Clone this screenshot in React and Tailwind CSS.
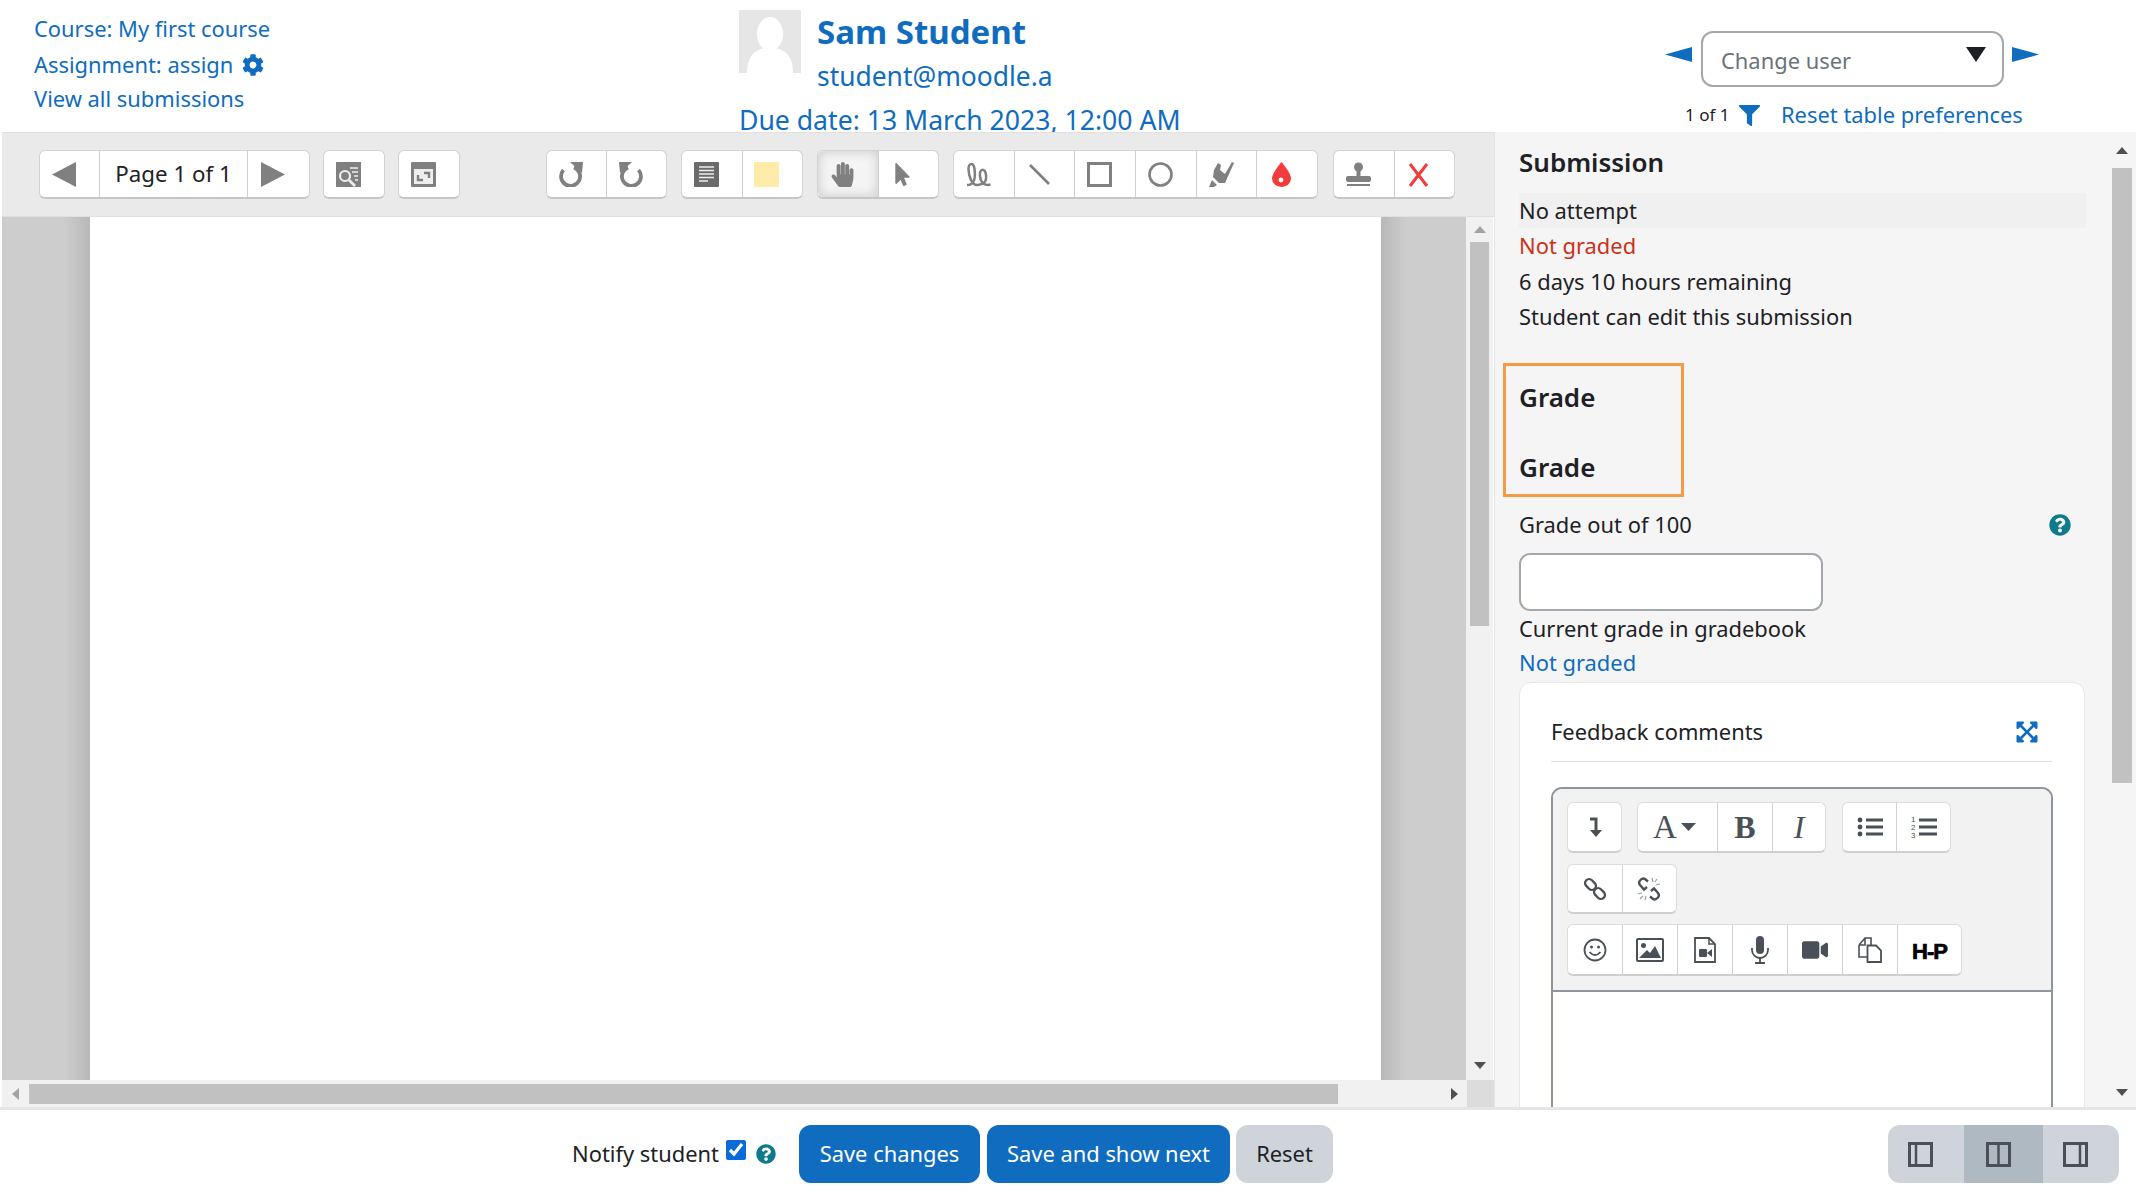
import { FaCog, FaFilter, FaQuestionCircle, FaExpandArrowsAlt, FaHandPaper, FaMousePointer, FaVideo } from "react-icons/fa";

const Svg = ({ size = 25, vb = 25, children }) => (
  <svg width={size} height={size} viewBox={`0 0 ${vb} ${vb}`}>{children}</svg>
);

const Tri = ({ w, h, dir, color }) => {
  const pts = {
    left: `0,${h / 2} ${w},0 ${w},${h}`,
    right: `0,0 ${w},${h / 2} 0,${h}`,
    up: `0,${h} ${w / 2},0 ${w},${h}`,
    down: `0,0 ${w},0 ${w / 2},${h}`,
  };
  return (
    <svg width={w} height={h} viewBox={`0 0 ${w} ${h}`} className="shrink-0">
      <polygon points={pts[dir]} fill={color} />
    </svg>
  );
};

const gray = "#808080";

const SearchPageIcon = () => (
  <Svg>
    <rect width="25" height="25" fill={gray} />
    <path d="M14 6h8M16 10h6M18 14h4M19 18h3" stroke="#eee" strokeWidth="1.6" />
    <circle cx="9" cy="14" r="5" fill={gray} stroke="#eee" strokeWidth="2.2" />
    <path d="M13 18l6 6" stroke="#eee" strokeWidth="2.6" />
  </Svg>
);

const ExpandIcon = () => (
  <Svg>
    <rect width="25" height="25" rx="1" fill={gray} />
    <rect x="3" y="7" width="19" height="15" fill="#eee" />
    <path d="M7 13v5h5M18 16v-5h-5" stroke={gray} strokeWidth="2.4" fill="none" />
  </Svg>
);

const RotateIcon = ({ flip }) => (
  <svg width="26" height="25" viewBox="0 0 26 25" style={flip ? { transform: "scaleX(-1)" } : undefined}>
    <path d="M5.5 8A9.5 9.5 0 1 0 16 5.5" stroke={gray} strokeWidth="3.8" fill="none" />
    <polygon points="12,0 25,0 24,11" fill={gray} />
  </svg>
);

const NoteIcon = () => (
  <Svg>
    <rect width="25" height="25" rx="1" fill="#6b6b6b" />
    <path d="M5 5h15M5 8.5h15M5 12h15M5 15.5h15M5 19h9" stroke="#eee" strokeWidth="1.5" />
  </Svg>
);

const PenIcon = () => (
  <Svg>
    <path
      d="M1 23C7 23 10 19 8.5 7C7.5 0 2.5 1 2.5 7C2.5 14 6 24 12 23C17 22 21 21 20 13C19 6 13 6 14 14C14.5 21 19 24 24.5 22.5"
      stroke={gray}
      strokeWidth="2.5"
      fill="none"
    />
  </Svg>
);

const HighlightIcon = () => (
  <Svg>
    <path d="M5 8L9 1L12 3L11 8L16 12L23 0L25 1L16 21L10 21L4 15Z" fill={gray} />
    <path d="M3 18L8 23L5 25L0 25Z" fill={gray} />
  </Svg>
);

const DropIcon = () => (
  <Svg>
    <path d="M12.5 0C12.5 0 3 11 3 16.5A9.5 8.5 0 0 0 22 16.5C22 11 12.5 0 12.5 0Z" fill="#f33b3b" />
    <circle cx="12" cy="18" r="2.4" fill="#fff" />
  </Svg>
);

const StampIcon = () => (
  <Svg>
    <circle cx="12.5" cy="5" r="4.5" fill={gray} />
    <rect x="10.5" y="5" width="4" height="10" fill={gray} />
    <rect x="0" y="14" width="25" height="6" rx="2" fill={gray} />
    <rect x="1" y="22" width="23" height="2" fill={gray} />
  </Svg>
);

const EraseIcon = () => (
  <Svg>
    <path d="M4 2L21 24M21 2L4 24" stroke="#f33b3b" strokeWidth="3" />
  </Svg>
);

const ToolGroup = ({ w, children }) => (
  <div
    className="flex h-[49px] shrink-0 rounded-[6px] border border-b-2 border-[#d2d2d2] border-b-[#c6c6c6] bg-white"
    style={{ width: w }}
  >
    {children}
  </div>
);

const ToolBtn = ({ children, active }) => (
  <div
    className={
      active
        ? "flex flex-1 items-center justify-center rounded-l-[6px] border-r border-[#cfcfcf] bg-[#f4f4f4] pr-[11px] shadow-[inset_0_0_12px_rgba(0,0,0,0.18)]"
        : "flex flex-1 items-center justify-center border-r border-[#cfcfcf] pr-[11px] last:border-r-0"
    }
  >
    {children}
  </div>
);

const Toolbar = () => (
  <div className="flex h-[85px] shrink-0 items-center border-y border-[#e0e0e0] bg-[#eaeaea] pl-[37px]">
    <div className="flex h-[49px] w-[271px] shrink-0 rounded-[6px] border border-b-2 border-[#d2d2d2] border-b-[#c6c6c6] bg-white">
      <div className="flex w-[60px] items-center justify-center border-r border-[#cfcfcf] pr-[11px]">
        <Tri w={24} h={25} dir="left" color={gray} />
      </div>
      <div className="flex w-[148px] items-center justify-center border-r border-[#cfcfcf] text-[22.3px] text-[#1d2125]">Page 1 of 1</div>
      <div className="flex flex-1 items-center justify-center pr-[11px]">
        <Tri w={24} h={25} dir="right" color={gray} />
      </div>
    </div>
    <div className="ml-[13px]">
      <ToolGroup w={62}><ToolBtn><SearchPageIcon /></ToolBtn></ToolGroup>
    </div>
    <div className="ml-[13px]">
      <ToolGroup w={62}><ToolBtn><ExpandIcon /></ToolBtn></ToolGroup>
    </div>
    <div className="ml-[86px]">
      <ToolGroup w={121}>
        <ToolBtn><RotateIcon /></ToolBtn>
        <ToolBtn><RotateIcon flip /></ToolBtn>
      </ToolGroup>
    </div>
    <div className="ml-[14px]">
      <ToolGroup w={122}>
        <ToolBtn><NoteIcon /></ToolBtn>
        <ToolBtn><div className="h-[25px] w-[25px] bg-[#ffeca8]" /></ToolBtn>
      </ToolGroup>
    </div>
    <div className="ml-[14px]">
      <ToolGroup w={122}>
        <ToolBtn active><FaHandPaper size={25} color={gray} /></ToolBtn>
        <ToolBtn><FaMousePointer size={23} color={gray} /></ToolBtn>
      </ToolGroup>
    </div>
    <div className="ml-[14px]">
      <ToolGroup w={365}>
        <ToolBtn><PenIcon /></ToolBtn>
        <ToolBtn>
          <Svg><path d="M3 3L22 22" stroke={gray} strokeWidth="2.6" /></Svg>
        </ToolBtn>
        <ToolBtn>
          <Svg><rect x="1.5" y="1.5" width="22" height="22" stroke={gray} strokeWidth="3" fill="none" /></Svg>
        </ToolBtn>
        <ToolBtn>
          <Svg><circle cx="12.5" cy="12.5" r="11" stroke={gray} strokeWidth="2.6" fill="none" /></Svg>
        </ToolBtn>
        <ToolBtn><HighlightIcon /></ToolBtn>
        <ToolBtn><DropIcon /></ToolBtn>
      </ToolGroup>
    </div>
    <div className="ml-[15px]">
      <ToolGroup w={122}>
        <ToolBtn><StampIcon /></ToolBtn>
        <ToolBtn><EraseIcon /></ToolBtn>
      </ToolGroup>
    </div>
  </div>
);

const PdfViewer = () => (
  <div className="flex min-h-0 flex-1">
    <div className="w-[88px] bg-gradient-to-r from-[#cdcdcd] via-[#cdcdcd] via-70% to-[#b8b8b8]" />
    <div className="w-[1291px] bg-white" />
    <div className="w-[85px] bg-gradient-to-r from-[#b8b8b8] via-[#cdcdcd] via-30% to-[#cdcdcd]" />
    {/* vertical scrollbar */}
    <div className="flex w-[27px] flex-col items-center bg-[#f1f1f1]">
      <div className="flex h-[25px] items-center">
        <Tri w={12} h={7} dir="up" color="#a3a3a3" />
      </div>
      <div className="h-[384px] w-[19px] bg-[#c1c1c1]" />
      <div className="mt-auto mb-[11px]">
        <Tri w={12} h={7} dir="down" color="#505050" />
      </div>
    </div>
  </div>
);

const HScrollbar = () => (
  <div className="flex h-[27px] shrink-0">
    <div className="flex flex-1 items-center bg-[#f1f1f1]">
      <div className="flex w-[27px] justify-center">
        <Tri w={7} h={12} dir="left" color="#a3a3a3" />
      </div>
      <div className="h-[20px] w-[1309px] bg-[#c1c1c1]" />
      <div className="ml-auto mr-[9px]">
        <Tri w={7} h={12} dir="right" color="#505050" />
      </div>
    </div>
    <div className="w-[27px] bg-[#dcdcdc]" />
  </div>
);

const EdGroup = ({ w, h, children }) => (
  <div
    className="flex shrink-0 rounded-[6px] border border-b-2 border-[#dcdcdc] border-b-[#cfcfcf] bg-white text-[#495057]"
    style={{ width: w, height: h }}
  >
    {children}
  </div>
);

const EdBtn = ({ w, children }) => (
  <div
    className="flex items-center justify-center border-r border-[#d2d2d2] last:border-r-0"
    style={w ? { width: w } : { flex: 1 }}
  >
    {children}
  </div>
);

const ic = "#495057";

const EditorToolbar = () => (
  <div className="flex flex-col border-b-2 border-[#8f959e] bg-[#f2f2f2] px-[14px] pb-[14px] pt-[13px]">
    <div className="flex">
      <EdGroup w={55} h={51}>
        <EdBtn>
          <svg width="20" height="22" viewBox="0 0 20 22">
            <path d="M5 3h6v12" stroke={ic} strokeWidth="3" fill="none" />
            <polygon points="5,14 17,14 11,21" fill={ic} />
          </svg>
        </EdBtn>
      </EdGroup>
      <div className="ml-[15px]">
        <EdGroup w={189} h={51}>
          <EdBtn w={80}>
            <div className="flex items-center pr-[6px]">
              <span className="font-['Liberation_Serif',serif] text-[33px] leading-none">A</span>
              <span className="ml-[4px]"><Tri w={15} h={8} dir="down" color={ic} /></span>
            </div>
          </EdBtn>
          <EdBtn w={55}>
            <span className="font-['Liberation_Serif',serif] text-[32px] font-bold leading-none">B</span>
          </EdBtn>
          <EdBtn>
            <span className="font-['Liberation_Serif',serif] text-[32px] italic leading-none">I</span>
          </EdBtn>
        </EdGroup>
      </div>
      <div className="ml-[16px]">
        <EdGroup w={109} h={51}>
          <EdBtn>
            <svg width="26" height="22" viewBox="0 0 26 22">
              <circle cx="3" cy="4" r="2.4" fill={ic} />
              <circle cx="3" cy="11" r="2.4" fill={ic} />
              <circle cx="3" cy="18" r="2.4" fill={ic} />
              <path d="M9 4h17M9 11h17M9 18h17" stroke={ic} strokeWidth="2.8" />
            </svg>
          </EdBtn>
          <EdBtn>
            <svg width="26" height="26" viewBox="0 0 26 26">
              <text x="0" y="8" fontSize="8" fill={ic} fontFamily="Liberation Sans">1</text>
              <text x="0" y="16" fontSize="8" fill={ic} fontFamily="Liberation Sans">2</text>
              <text x="0" y="24" fontSize="8" fill={ic} fontFamily="Liberation Sans">3</text>
              <path d="M8 6h18M8 13h18M8 20h18" stroke={ic} strokeWidth="2.8" />
            </svg>
          </EdBtn>
        </EdGroup>
      </div>
    </div>
    <div className="mt-[11px] flex">
      <EdGroup w={110} h={50}>
        <EdBtn>
          <Svg size={24} vb={24}>
            <rect x="1.5" y="3.5" width="12" height="8" rx="4" transform="rotate(45 7.5 7.5)" stroke={ic} strokeWidth="2.4" fill="none" />
            <rect x="10.5" y="12.5" width="12" height="8" rx="4" transform="rotate(45 16.5 16.5)" stroke={ic} strokeWidth="2.4" fill="none" />
          </Svg>
        </EdBtn>
        <EdBtn>
          <Svg size={24} vb={24}>
            <path d="M11 4.5L8.5 2.5Q6 0.5 3.5 3Q1 5.5 3 8L7 12.5L10 10" stroke={ic} strokeWidth="2.4" fill="none" />
            <path d="M13 19.5L15.5 21.5Q18 23.5 20.5 21Q23 18.5 21 16L17 11.5L14 14" stroke={ic} strokeWidth="2.4" fill="none" />
            <path d="M15 1l1 4M23 7l-4 1M20 2l-2 3M1 17l4-1M8 23l1-4M3 22l3-3" stroke="#9aa0a6" strokeWidth="1.2" />
          </Svg>
        </EdBtn>
      </EdGroup>
    </div>
    <div className="mt-[10px] flex">
      <EdGroup w={395} h={52}>
        <EdBtn w={55}>
          <Svg size={24} vb={24}>
            <circle cx="12" cy="12" r="10.5" stroke={ic} strokeWidth="1.8" fill="none" />
            <circle cx="8.5" cy="9" r="1.5" fill={ic} />
            <circle cx="15.5" cy="9" r="1.5" fill={ic} />
            <path d="M6.5 14Q12 20 17.5 14" stroke={ic} strokeWidth="1.8" fill="none" />
          </Svg>
        </EdBtn>
        <EdBtn w={55}>
          <svg width="28" height="24" viewBox="0 0 28 24">
            <rect x="1" y="1" width="26" height="22" rx="1" stroke={ic} strokeWidth="2" fill="none" />
            <circle cx="7.5" cy="7.5" r="2.5" fill={ic} />
            <polygon points="3,20 11,12 14,15 19,8 25,20" fill={ic} />
          </svg>
        </EdBtn>
        <EdBtn w={55}>
          <svg width="22" height="26" viewBox="0 0 22 26">
            <path d="M1 1h14l6 6v18H1Z" stroke={ic} strokeWidth="1.8" fill="none" />
            <path d="M15 1v6h6" stroke={ic} strokeWidth="1.5" fill="none" />
            <rect x="5" y="12" width="8" height="8" rx="1" fill={ic} />
            <polygon points="13,16 18,12 18,20" fill={ic} />
          </svg>
        </EdBtn>
        <EdBtn w={55}>
          <svg width="18" height="28" viewBox="0 0 18 28">
            <rect x="5" y="0" width="8" height="18" rx="4" fill={ic} />
            <path d="M1 12v2a8 8 0 0 0 16 0v-2" stroke={ic} strokeWidth="1.8" fill="none" />
            <path d="M9 22v4M4 27h10" stroke={ic} strokeWidth="1.8" />
          </svg>
        </EdBtn>
        <EdBtn w={55}><FaVideo size={26} color={ic} /></EdBtn>
        <EdBtn w={55}>
          <svg width="24" height="26" viewBox="0 0 24 26">
            <path d="M1 8L7 1H13V8M1 8H7V1M1 8V20H9" stroke={ic} strokeWidth="1.6" fill="none" />
            <path d="M9.5 8.5H18L23 13.5V25H9.5Z" stroke={ic} strokeWidth="1.8" fill="none" />
          </svg>
        </EdBtn>
        <EdBtn>
          <span className="mt-[4px] font-['Liberation_Sans',sans-serif] text-[22px] font-bold leading-none tracking-[-1px] text-black [-webkit-text-stroke:0.7px_black]">H-P</span>
        </EdBtn>
      </EdGroup>
    </div>
  </div>
);

const GradePanel = () => (
  <div className="flex w-[642px] border-l border-[#e4e4e4] bg-[#f5f5f5]">
    <div className="min-w-0 flex-1 overflow-hidden pl-[24px]">
      <div className="flex h-[61px] items-center text-[26px] font-semibold text-[#1d2125]">Submission</div>
      <div className="flex h-[35px] w-[567px] items-center bg-[#f0f0f0] pt-[2px]">No attempt</div>
      <div className="mt-[1px] flex h-[35px] items-center text-[#ca3120]">Not graded</div>
      <div className="flex h-[36px] items-center">6 days 10 hours remaining</div>
      <div className="flex h-[35px] items-center">Student can edit this submission</div>

      <div className="-ml-[16px] mt-[28px] h-[134px] w-[181px] border-[3px] border-[#f79a45] pl-[13px] pt-[15px] text-[26px] font-semibold leading-[33px]">
        <div>Grade</div>
        <div className="mt-[37px]">Grade</div>
      </div>

      <div className="mt-[13px] flex h-[30px] w-[552px] items-center justify-between">
        <span>Grade out of 100</span>
        <FaQuestionCircle size={22} color="#0f7a8c" />
      </div>
      <div className="mt-[13px] h-[58px] w-[304px] rounded-[11px] border-2 border-[#a3a8ae] bg-white" />
      <div className="mt-[1px] flex h-[35px] items-center">Current grade in gradebook</div>
      <div className="flex h-[33px] items-center text-[#0f6cbf]">Not graded</div>

      <div className="mt-[2px] h-[500px] w-[566px] rounded-t-[12px] border border-[#e6e6e6] bg-white pl-[31px] pt-[32px]">
        <div className="flex h-[47px] w-[501px] items-start justify-between border-b border-[#e2e2e2] pr-[13px]">
          <span className="flex h-[34px] items-center text-[#1d2125]">Feedback comments</span>
          <FaExpandArrowsAlt size={24} color="#0f6cbf" className="mt-[5px]" />
        </div>
        <div className="mt-[25px] h-[400px] w-[502px] overflow-hidden rounded-t-[11px] border-2 border-[#8f959e] bg-white">
          <EditorToolbar />
        </div>
      </div>
    </div>
    <div className="flex w-[24px] shrink-0 flex-col items-center bg-[#f5f5f5] pr-[4px]">
      <div className="flex h-[36px] items-center">
        <Tri w={12} h={7} dir="up" color="#505050" />
      </div>
      <div className="h-[615px] w-[20px] bg-[#c1c1c1]" />
      <div className="mt-auto mb-[11px]">
        <Tri w={12} h={7} dir="down" color="#505050" />
      </div>
    </div>
  </div>
);

const PaneIcon = ({ d }) => (
  <Svg>
    <rect x="1.5" y="1.5" width="22" height="22" fill="none" stroke="#495057" strokeWidth="3" />
    <path d={d} stroke="#495057" strokeWidth="2.5" />
  </Svg>
);

const Header = () => (
  <div className="flex h-[132px] shrink-0 bg-white">
    <div className="w-[739px] shrink-0 pl-[34px] pt-[11px] text-[#0f6cbf]">
      <div className="flex h-[36px] items-center">Course: My first course</div>
      <div className="flex h-[36px] items-center">
        Assignment: assign
        <FaCog size={22} className="ml-[9px]" />
      </div>
      <div className="flex h-[33px] items-center">View all submissions</div>
    </div>
    <div className="w-[926px] shrink-0 pt-[10px] text-[#0f6cbf]">
      <div className="flex h-[90px]">
        <div className="h-[63px] w-[62px] shrink-0 bg-[#e6e6e6]">
          <svg width="62" height="63" viewBox="0 0 62 63">
            <ellipse cx="31" cy="24" rx="13" ry="17" fill="#fff" />
            <path d="M8 63C8 48 14 40 26 38h10C48 40 54 48 54 63Z" fill="#fff" />
          </svg>
        </div>
        <div className="ml-[16px]">
          <div className="flex h-[44px] items-center text-[33px] font-bold">Sam Student</div>
          <div className="flex h-[46px] items-center text-[26.4px]">student@moodle.a</div>
        </div>
      </div>
      <div className="mt-[4px] text-[26.6px] leading-[32px]">Due date: 13 March 2023, 12:00 AM</div>
    </div>
    <div>
      <div className="mt-[31px] flex items-start">
        <div className="mt-[16px]">
          <Tri w={27} h={15} dir="left" color="#0f6cbf" />
        </div>
        <div className="ml-[9px] flex h-[56px] w-[303px] items-start justify-between rounded-[12px] border-2 border-[#a3a8ae] bg-white pl-[18px] pr-[16px]">
          <span className="mt-[12px] text-[#6a737b]">Change user</span>
          <div className="mt-[14px]">
            <Tri w={20} h={15} dir="down" color="#1d2125" />
          </div>
        </div>
        <div className="ml-[8px] mt-[16px]">
          <Tri w={27} h={15} dir="right" color="#0f6cbf" />
        </div>
      </div>
      <div className="flex h-[56px] items-center pl-[20px]">
        <span className="w-[45px] whitespace-nowrap text-[17px] text-[#1d2125]">1 of 1</span>
        <FaFilter size={21} color="#0f6cbf" className="ml-[9px]" />
        <span className="ml-[21px] whitespace-nowrap text-[#0f6cbf]">Reset table preferences</span>
      </div>
    </div>
  </div>
);

const Footer = () => (
  <div className="flex h-[96px] shrink-0 items-start border-t-[3px] border-[#e5e5e5] bg-white pl-[572px] pt-[15px]">
    <div className="flex h-[58px] w-[227px] shrink-0 items-center text-[#1d2125]">
      <span>Notify student</span>
      <input type="checkbox" defaultChecked className="ml-[7px] -mt-[8px] h-[20px] w-[20px] accent-[#0b6bd6]" />
      <FaQuestionCircle size={20} color="#0f7a8c" className="ml-[10px]" />
    </div>
    <button className="h-[58px] w-[181px] shrink-0 rounded-[12px] bg-[#0f6cbf] text-white">Save changes</button>
    <button className="ml-[7px] h-[58px] w-[243px] shrink-0 rounded-[12px] bg-[#0f6cbf] text-white">Save and show next</button>
    <button className="ml-[6px] h-[58px] w-[97px] shrink-0 rounded-[12px] bg-[#ced4da] text-[#1d2125]">Reset</button>
    <div className="ml-[555px] flex h-[58px] w-[231px] shrink-0 overflow-hidden rounded-[12px] bg-[#ced4da]">
      <div className="flex w-[76px] items-center justify-center pr-[11px]"><PaneIcon d="M8 2v21" /></div>
      <div className="flex w-[79px] items-center justify-center bg-[#afb9c2] pr-[11px]"><PaneIcon d="M12.5 2v21" /></div>
      <div className="flex flex-1 items-center justify-center pr-[11px]"><PaneIcon d="M17 2v21" /></div>
    </div>
  </div>
);

export default function App() {
  return (
    <div className="flex h-[1203px] w-[2136px] flex-col overflow-hidden bg-white font-['Noto_Sans',sans-serif] text-[21.9px] text-[#1d2125]">
      <Header />
      <div className="flex min-h-0 flex-1">
        <div className="flex w-[1494px] shrink-0 flex-col pl-[2px]">
          <Toolbar />
          <PdfViewer />
          <HScrollbar />
        </div>
        <GradePanel />
      </div>
      <Footer />
    </div>
  );
}
